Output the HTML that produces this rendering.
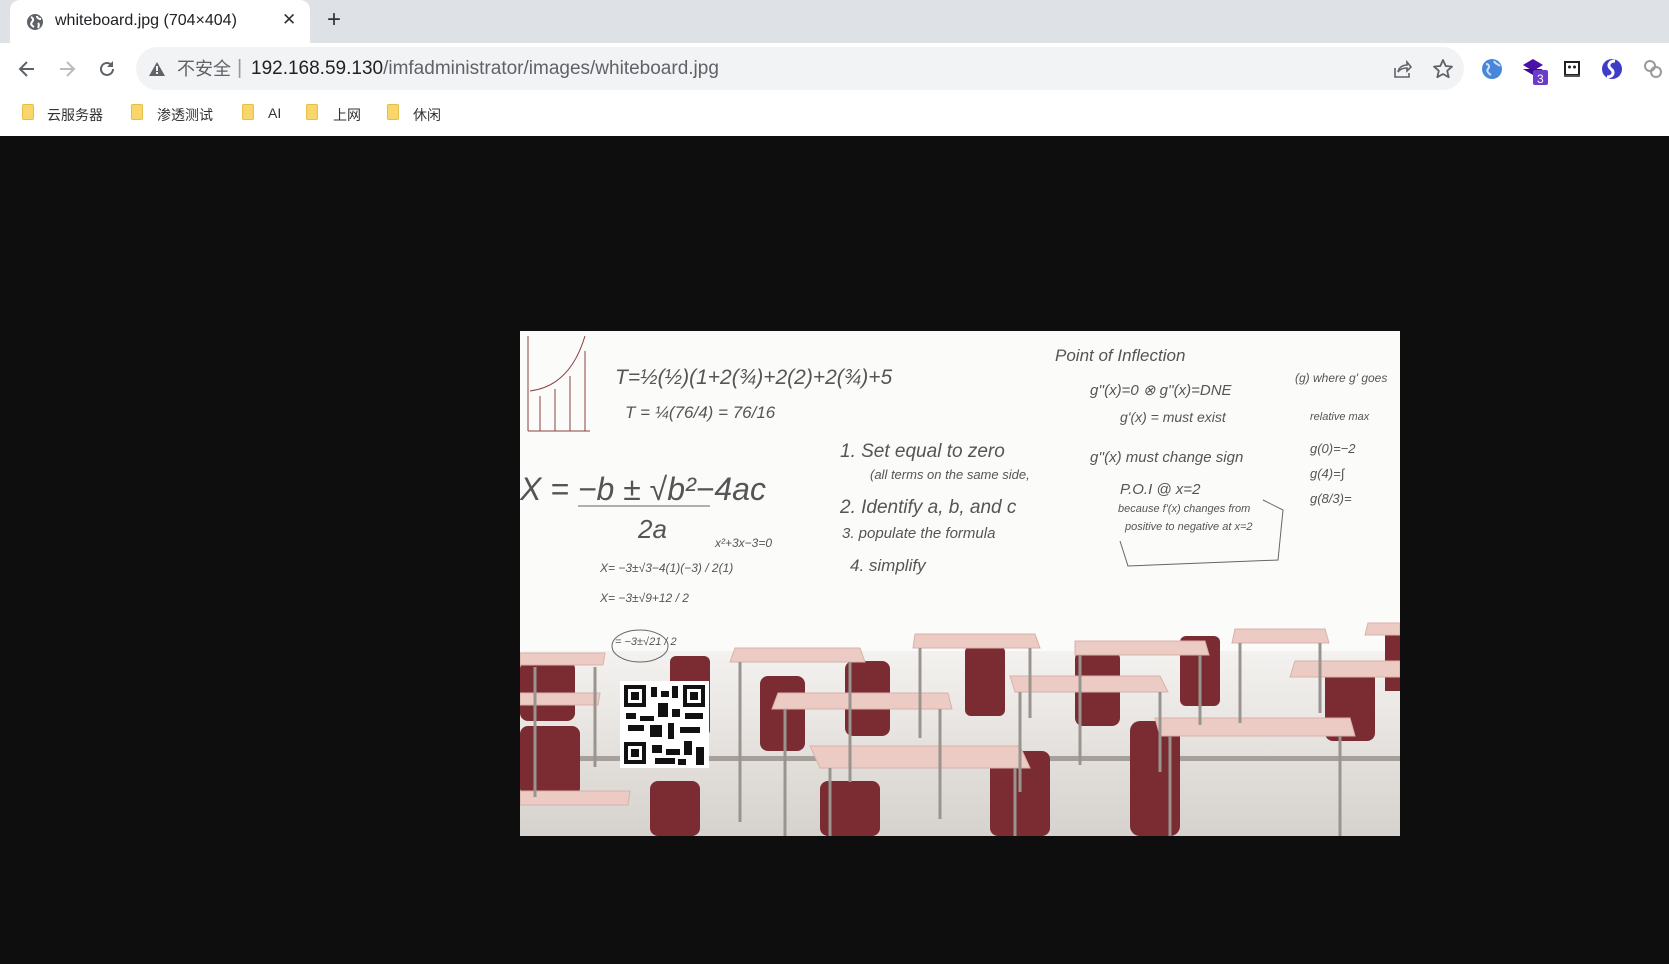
<!DOCTYPE html>
<html><head><meta charset="utf-8"><style>
*{margin:0;padding:0;box-sizing:border-box}
body{width:1669px;height:964px;overflow:hidden;background:#0e0e0e;font-family:"Liberation Sans","Noto Sans CJK SC",sans-serif;position:relative}
.top{position:absolute;left:0;top:0;width:1669px;height:43px;background:#dee1e6}
.tab{position:absolute;left:10px;top:0;width:300px;height:43px;background:#fff;border-radius:10px 10px 0 0}
.bar{position:absolute;left:0;top:43px;width:1669px;height:93px;background:#fff}
.omni{position:absolute;left:136px;top:47px;width:1328px;height:43px;background:#f1f3f4;border-radius:22px}
.t{position:absolute;white-space:nowrap}
.bm{position:absolute;top:105px;font-size:14px;color:#333}
.fold{position:absolute;top:104px;width:12px;height:16px;background:#f9d66b;border-radius:2px;border:1px solid #e8bd45}
.img{position:absolute;left:520px;top:331px;width:880px;height:505px;overflow:hidden;background:#fbfbfa}
.hw{position:absolute;font-family:"Liberation Sans Narrow","Liberation Sans",sans-serif;font-style:italic;color:#555;white-space:nowrap}
</style></head><body>
<div class="top"></div>
<div class="tab"></div>
<svg class="t" style="left:26px;top:13px" width="18" height="18" viewBox="0 0 18 18"><circle cx="9" cy="9" r="8" fill="#5f6368"/><path d="M5 4c2 1 3 3 1 5s0 4 2 5M11 3c0 2 2 3 4 3M12 10c1 1 1 3 0 5" stroke="#fff" stroke-width="2" fill="none"/></svg>
<div class="t" style="left:55px;top:12px;font-size:16px;color:#202124">whiteboard.jpg (704×404)</div>
<div class="t" style="left:282px;top:10px;font-size:17px;color:#333">✕</div>
<div class="t" style="left:327px;top:6px;font-size:24px;color:#333">+</div>
<div class="bar"></div>
<svg class="t" style="left:17px;top:59px" width="20" height="20" viewBox="0 0 20 20"><path d="M17 10H4M10 3l-7 7 7 7" stroke="#5f6368" stroke-width="2" fill="none"/></svg>
<svg class="t" style="left:57px;top:59px" width="20" height="20" viewBox="0 0 20 20"><path d="M3 10h13M10 3l7 7-7 7" stroke="#bbb" stroke-width="2" fill="none"/></svg>
<svg class="t" style="left:97px;top:59px" width="20" height="20" viewBox="0 0 20 20"><path d="M16 10a6 6 0 1 1-2-4.5" stroke="#5f6368" stroke-width="2" fill="none"/><path d="M16 2v6h-6z" fill="#5f6368"/></svg>
<div class="omni"></div>
<svg class="t" style="left:148px;top:61px" width="18" height="16" viewBox="0 0 18 16"><path d="M9 1L17 15H1z" fill="#5f6368"/><rect x="8" y="5" width="2" height="5" fill="#f1f3f4"/><rect x="8" y="11" width="2" height="2" fill="#f1f3f4"/></svg>
<div class="t" style="left:177px;top:58px;font-size:18px;line-height:22px;color:#5f6368">不安全</div>
<div class="t" style="left:237px;top:57px;font-size:20px;color:#999">|</div>
<div class="t" style="left:251px;top:58px;font-size:19px;line-height:22px;color:#202124">192.168.59.130<span style="color:#5f6368">/imfadministrator/images/whiteboard.jpg</span></div>
<svg class="t" style="left:1392px;top:59px" width="20" height="20" viewBox="0 0 20 20"><path d="M3 9v9h14v-4M6 13c1-5 5-7 9-7V3l4 5-4 4V9c-4 0-7 1-9 4z" stroke="#5f6368" stroke-width="1.6" fill="none"/></svg>
<svg class="t" style="left:1432px;top:58px" width="22" height="22" viewBox="0 0 22 22"><path d="M11 2l2.7 6 6.3.6-4.8 4.2 1.5 6.4L11 16l-5.7 3.2 1.5-6.4L2 8.6 8.3 8z" fill="none" stroke="#5f6368" stroke-width="1.8" stroke-linejoin="round"/></svg>
<svg class="t" style="left:1481px;top:58px" width="22" height="22"><circle cx="11" cy="11" r="10" fill="#4a86d8"/><path d="M5 6c3 0 4 3 2 5s1 5 3 6M13 3c1 3 4 3 6 5" stroke="#c8e0ff" stroke-width="2" fill="none"/></svg>
<svg class="t" style="left:1521px;top:56px" width="30" height="30"><path d="M2 9l10-6 10 6-10 6z" fill="#4a10a8"/><path d="M2 13l10 6 10-6" fill="#3a0a90"/><rect x="12" y="14" width="15" height="15" rx="2" fill="#6a3cc8"/><text x="16" y="27" font-size="12" fill="#fff" font-family="Liberation Sans">3</text></svg>
<svg class="t" style="left:1563px;top:60px" width="18" height="18"><rect x="2" y="2" width="14" height="13" fill="#fff" stroke="#222" stroke-width="2"/><circle cx="6.5" cy="7" r="1.5" fill="#222"/><circle cx="11.5" cy="7" r="1.5" fill="#222"/><rect x="1" y="15" width="16" height="2" fill="#555"/></svg>
<svg class="t" style="left:1601px;top:58px" width="22" height="22"><circle cx="11" cy="11" r="10" fill="#3f3cc8"/><path d="M14 3c-6 0-8 5-4 8s2 8-4 8" stroke="#fff" stroke-width="3" fill="none"/></svg>
<svg class="t" style="left:1642px;top:58px" width="22" height="22"><circle cx="8" cy="8" r="5" fill="none" stroke="#999" stroke-width="2"/><circle cx="14" cy="14" r="5" fill="none" stroke="#999" stroke-width="2"/></svg>
<div class="fold" style="left:22px"></div><div class="bm" style="left:47px">云服务器</div>
<div class="fold" style="left:131px"></div><div class="bm" style="left:157px">渗透测试</div>
<div class="fold" style="left:242px"></div><div class="bm" style="left:268px">AI</div>
<div class="fold" style="left:306px"></div><div class="bm" style="left:333px">上网</div>
<div class="fold" style="left:387px"></div><div class="bm" style="left:413px">休闲</div>

<div class="img">
<div style="position:absolute;left:0;top:320px;width:880px;height:185px;background:linear-gradient(#f4f2f0,#d6d2cd)"></div>
<div style="position:absolute;left:0;top:425px;width:880px;height:5px;background:#6a5f58;opacity:.5"></div>
<svg style="position:absolute;left:0;top:0" width="880" height="505">
<g fill="#7b2c33">
<rect x="0" y="330" width="55" height="60" rx="8"/><rect x="0" y="395" width="60" height="70" rx="8"/>
<rect x="240" y="345" width="45" height="75" rx="8"/><rect x="150" y="325" width="40" height="80" rx="6"/>
<rect x="325" y="330" width="45" height="75" rx="8"/><rect x="445" y="315" width="40" height="70" rx="6"/>
<rect x="555" y="320" width="45" height="75" rx="8"/><rect x="660" y="305" width="40" height="70" rx="6"/>
<rect x="610" y="390" width="50" height="115" rx="10"/><rect x="805" y="330" width="50" height="80" rx="8"/>
<rect x="865" y="300" width="15" height="60"/><rect x="470" y="420" width="60" height="85" rx="8"/>
<rect x="300" y="450" width="60" height="55" rx="8"/><rect x="130" y="450" width="50" height="55" rx="8"/>
</g>
<g fill="#ebcbc3" stroke="#d8b2aa">
<path d="M0 322h85l-2 12H0z"/><path d="M0 362h80l-2 12H0z"/><path d="M0 460h110l-2 14H0z"/>
<path d="M215 317h125l5 14H210z"/><path d="M258 362h170l4 16H252z"/>
<path d="M395 303h120l5 14H393z"/><path d="M290 415h210l10 22H300z"/>
<path d="M555 310h130l4 14H555z"/><path d="M490 345h150l8 16H495z"/>
<path d="M715 298h90l4 14H712z"/><path d="M775 330h105v16H770z"/><path d="M635 387h195l5 18H640z"/>
<path d="M848 292h32v12H845z"/>
</g>
<g stroke="#9a948e" stroke-width="3" fill="none">
<path d="M15 336v130M75 336v100M220 331v160M330 331v120M265 378v127M420 378v110M310 437v68M495 437v68M400 317v90M510 317v70M560 324v110M680 324v70M500 361v100M640 361v80M720 312v80M800 312v70M650 405v100M820 405v100"/>
</g>
<rect x="100" y="350" width="89" height="87" fill="#fff"/>
<g fill="#111">
<rect x="104" y="354" width="22" height="22"/><rect x="163" y="354" width="22" height="22"/><rect x="104" y="411" width="22" height="22"/>
<rect x="131" y="356" width="6" height="10"/><rect x="141" y="360" width="8" height="6"/><rect x="152" y="355" width="6" height="12"/>
<rect x="106" y="382" width="10" height="6"/><rect x="120" y="385" width="14" height="5"/><rect x="138" y="372" width="10" height="14"/><rect x="152" y="378" width="8" height="8"/><rect x="165" y="382" width="18" height="6"/>
<rect x="108" y="394" width="16" height="6"/><rect x="130" y="394" width="12" height="12"/><rect x="148" y="392" width="6" height="16"/><rect x="160" y="396" width="20" height="6"/>
<rect x="132" y="414" width="10" height="8"/><rect x="146" y="418" width="14" height="6"/><rect x="164" y="410" width="8" height="14"/><rect x="176" y="416" width="8" height="18"/><rect x="135" y="427" width="20" height="6"/><rect x="158" y="428" width="8" height="6"/>
</g>
<g fill="#fff"><rect x="108" y="358" width="14" height="14"/><rect x="167" y="358" width="14" height="14"/><rect x="108" y="415" width="14" height="14"/></g>
<g fill="#111"><rect x="111" y="361" width="8" height="8"/><rect x="170" y="361" width="8" height="8"/><rect x="111" y="418" width="8" height="8"/></g>
<path d="M8 100 V5 M8 100 H70 M10 60q40-5 55-55M20 65v35M35 58v42M50 45v55M65 20v80" stroke="#8a4040" fill="none"/>
<path d="M58 175h132M600 210l8 25 150-6 5-50-20-10" stroke="#666" fill="none"/>
<ellipse cx="120" cy="315" rx="28" ry="16" fill="none" stroke="#666"/>
</svg>
<div class="hw" style="left:95px;top:35px;font-size:21px">T=½(½)(1+2(¾)+2(2)+2(¾)+5</div>
<div class="hw" style="left:105px;top:72px;font-size:17px">T = ¼(76/4) = 76/16</div>
<div class="hw" style="left:0px;top:140px;font-size:32px">X = −b ± √b²−4ac</div>
<div class="hw" style="left:118px;top:183px;font-size:26px">2a</div>
<div class="hw" style="left:195px;top:205px;font-size:12px">x²+3x−3=0</div>
<div class="hw" style="left:80px;top:230px;font-size:12px">X= −3±√3−4(1)(−3) / 2(1)</div>
<div class="hw" style="left:80px;top:260px;font-size:12px">X= −3±√9+12 / 2</div>
<div class="hw" style="left:95px;top:305px;font-size:11px">= −3±√21 / 2</div>
<div class="hw" style="left:320px;top:110px;font-size:19px">1. Set equal to zero</div>
<div class="hw" style="left:350px;top:136px;font-size:13px">(all terms on the same side,</div>
<div class="hw" style="left:320px;top:166px;font-size:19px">2. Identify a, b, and c</div>
<div class="hw" style="left:322px;top:194px;font-size:15px">3. populate the formula</div>
<div class="hw" style="left:330px;top:225px;font-size:17px">4. simplify</div>
<div class="hw" style="left:535px;top:15px;font-size:17px">Point of Inflection</div>
<div class="hw" style="left:570px;top:50px;font-size:15px">g''(x)=0 ⊗ g''(x)=DNE</div>
<div class="hw" style="left:600px;top:78px;font-size:14px">g'(x) = must exist</div>
<div class="hw" style="left:570px;top:118px;font-size:15px">g''(x) must change sign</div>
<div class="hw" style="left:600px;top:150px;font-size:15px">P.O.I @ x=2</div>
<div class="hw" style="left:598px;top:172px;font-size:11px">because f'(x) changes from</div>
<div class="hw" style="left:605px;top:190px;font-size:11px">positive to negative at x=2</div>
<div class="hw" style="left:775px;top:40px;font-size:12px">(g) where g' goes</div>
<div class="hw" style="left:790px;top:80px;font-size:11px">relative max</div>
<div class="hw" style="left:790px;top:110px;font-size:13px">g(0)=−2</div>
<div class="hw" style="left:790px;top:135px;font-size:13px">g(4)=∫</div>
<div class="hw" style="left:790px;top:160px;font-size:13px">g(8/3)=</div>
</div>
</body></html>
